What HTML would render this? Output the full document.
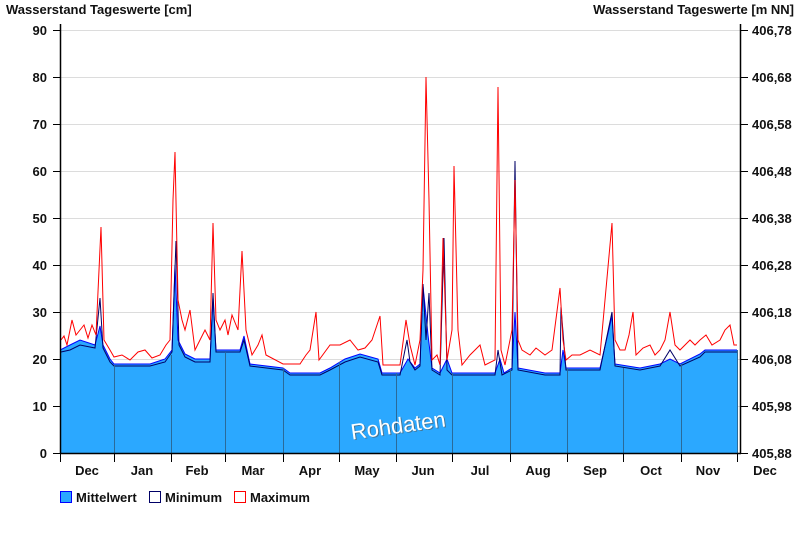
<!DOCTYPE html>
<html><head><meta charset="utf-8"><style>
html,body{margin:0;padding:0;background:#fff;width:800px;height:550px;overflow:hidden}
svg text{font-family:"Liberation Sans",Arial,sans-serif;font-weight:bold;fill:#111}
</style></head><body>
<svg width="800" height="550" xmlns="http://www.w3.org/2000/svg">
<text x="6" y="14" font-size="13">Wasserstand Tageswerte [cm]</text>
<text x="794" y="14" font-size="13" text-anchor="end">Wasserstand Tageswerte [m NN]</text>
<g stroke="#dcdcdc" stroke-width="1">
<line x1="61" y1="30.5" x2="740" y2="30.5"/><line x1="61" y1="77.5" x2="740" y2="77.5"/>
<line x1="61" y1="124.5" x2="740" y2="124.5"/><line x1="61" y1="171.5" x2="740" y2="171.5"/>
<line x1="61" y1="218.5" x2="740" y2="218.5"/><line x1="61" y1="265.5" x2="740" y2="265.5"/>
<line x1="61" y1="312.5" x2="740" y2="312.5"/><line x1="61" y1="359.5" x2="740" y2="359.5"/>
<line x1="61" y1="406.5" x2="740" y2="406.5"/>
</g>
<polygon fill="#2ba8ff" points="61,453 61,349.6 70,345 80,340 95,345 100,326 103,345 110,359 114,364 150,364 165,359 172,350 175,265 178,340 185,354 195,359 210,359 213,298 216,350 225,350 240,350 244,336 250,364 283,368 290,373 320,373 330,368 345,359 360,354 378,359 382,373 400,373 408,359 415,368 420,364 423,286 428,335 432,368 440,373 447,359 452,373 495,373 500,359 504,373 512,368 515,312 518,368 545,373 560,373 563,350 566,368 600,368 612,316 615,364 640,368 660,364 670,359 680,364 700,354 705,350 737,350 737,453"/>
<polyline fill="none" stroke="#0000ff" stroke-width="1" points="61,349.6 70,345 80,340 95,345 100,326 103,345 110,359 114,364 150,364 165,359 172,350 175,265 178,340 185,354 195,359 210,359 213,298 216,350 225,350 240,350 244,336 250,364 283,368 290,373 320,373 330,368 345,359 360,354 378,359 382,373 400,373 408,359 415,368 420,364 423,286 428,335 432,368 440,373 447,359 452,373 495,373 500,359 504,373 512,368 515,312 518,368 545,373 560,373 563,350 566,368 600,368 612,316 615,364 640,368 660,364 670,359 680,364 700,354 705,350 737,350"/>
<polyline fill="none" stroke="#000066" stroke-width="1" points="61,352 70,350 80,345 95,348 100,298 103,348 110,362 114,366 150,366 165,362 172,352 176,241 179,345 185,357 195,362 210,362 213,293 216,352 225,352 240,352 244,340 250,366 283,370 290,375 320,375 330,370 345,362 360,357 378,362 382,375 400,375 407,340 410,362 415,370 420,366 423,284 426,340 429,293 432,370 440,375 444,238 447,370 452,375 495,375 498,350 502,375 512,370 515,161 518,370 545,375 560,375 561,307 566,370 600,370 612,312 615,366 640,370 660,366 670,350 680,366 700,357 705,352 737,352"/>
<polyline fill="none" stroke="#ff0000" stroke-width="1" points="61,340 64,336 67,345 72,320 76,335 80,330 84,325 88,338 92,325 96,335 101,227 104,340 110,350 114,357 122,355 130,360 138,352 145,350 152,358 160,355 166,345 170,340 173,200 175,152 178,300 182,320 185,330 190,310 195,350 200,340 205,330 210,340 213,223 216,320 220,330 225,320 228,335 232,315 238,330 242,251 246,330 252,355 258,345 262,335 266,355 283,364 300,364 306,355 310,350 316,312 319,360 330,345 340,345 350,340 358,350 365,348 372,340 380,316 383,365 400,365 406,320 410,345 415,365 420,340 423,270 426,77 429,200 432,360 437,355 440,365 443,238 447,360 452,330 454,166 458,330 462,365 470,355 480,345 485,365 495,360 498,87 501,350 505,365 512,330 515,180 518,340 522,350 530,355 536,348 545,355 552,350 560,288 563,340 566,360 572,355 580,355 590,350 600,355 612,223 615,340 620,350 625,350 629,335 633,312 636,355 643,348 650,345 655,355 660,350 665,340 670,312 675,345 680,350 690,340 695,345 700,340 706,335 712,345 720,340 725,330 730,325 734,345 737,345"/>
<g stroke="#2a6a9a" stroke-width="1">
<line x1="114.5" y1="365" x2="114.5" y2="453"/><line x1="171.5" y1="355" x2="171.5" y2="453"/>
<line x1="225.5" y1="352" x2="225.5" y2="453"/><line x1="283.5" y1="368" x2="283.5" y2="453"/>
<line x1="339.5" y1="362" x2="339.5" y2="453"/><line x1="396.5" y1="373" x2="396.5" y2="453"/>
<line x1="452.5" y1="373" x2="452.5" y2="453"/><line x1="510.5" y1="370" x2="510.5" y2="453"/>
<line x1="567.5" y1="368" x2="567.5" y2="453"/><line x1="623.5" y1="368" x2="623.5" y2="453"/>
<line x1="681.5" y1="364" x2="681.5" y2="453"/><line x1="737.5" y1="350" x2="737.5" y2="453"/>
</g>
<g stroke="#000" stroke-width="1.5">
<line x1="60.5" y1="24" x2="60.5" y2="454"/><line x1="740.5" y1="24" x2="740.5" y2="454"/>
<line x1="60" y1="453.5" x2="741" y2="453.5"/>
</g>
<g stroke="#000" stroke-width="1">
<line x1="53" y1="30.5" x2="60" y2="30.5"/><line x1="53" y1="77.5" x2="60" y2="77.5"/><line x1="53" y1="124.5" x2="60" y2="124.5"/><line x1="53" y1="171.5" x2="60" y2="171.5"/><line x1="53" y1="218.5" x2="60" y2="218.5"/><line x1="53" y1="265.5" x2="60" y2="265.5"/><line x1="53" y1="312.5" x2="60" y2="312.5"/><line x1="53" y1="359.5" x2="60" y2="359.5"/><line x1="53" y1="406.5" x2="60" y2="406.5"/><line x1="53" y1="453.5" x2="60" y2="453.5"/>
<line x1="741" y1="30.5" x2="748" y2="30.5"/><line x1="741" y1="77.5" x2="748" y2="77.5"/><line x1="741" y1="124.5" x2="748" y2="124.5"/><line x1="741" y1="171.5" x2="748" y2="171.5"/><line x1="741" y1="218.5" x2="748" y2="218.5"/><line x1="741" y1="265.5" x2="748" y2="265.5"/><line x1="741" y1="312.5" x2="748" y2="312.5"/><line x1="741" y1="359.5" x2="748" y2="359.5"/><line x1="741" y1="406.5" x2="748" y2="406.5"/><line x1="741" y1="453.5" x2="748" y2="453.5"/>
<line x1="60.5" y1="453" x2="60.5" y2="462"/><line x1="114.5" y1="453" x2="114.5" y2="462"/><line x1="171.5" y1="453" x2="171.5" y2="462"/><line x1="225.5" y1="453" x2="225.5" y2="462"/><line x1="283.5" y1="453" x2="283.5" y2="462"/><line x1="339.5" y1="453" x2="339.5" y2="462"/><line x1="396.5" y1="453" x2="396.5" y2="462"/><line x1="452.5" y1="453" x2="452.5" y2="462"/><line x1="510.5" y1="453" x2="510.5" y2="462"/><line x1="567.5" y1="453" x2="567.5" y2="462"/><line x1="623.5" y1="453" x2="623.5" y2="462"/><line x1="681.5" y1="453" x2="681.5" y2="462"/><line x1="737.5" y1="453" x2="737.5" y2="462"/>
</g>
<g font-size="13" text-anchor="end">
<text x="47" y="35">90</text><text x="47" y="82">80</text><text x="47" y="129">70</text><text x="47" y="176">60</text><text x="47" y="223">50</text><text x="47" y="270">40</text><text x="47" y="317">30</text><text x="47" y="364">20</text><text x="47" y="411">10</text><text x="47" y="458">0</text>
</g>
<g font-size="13">
<text x="752" y="35">406,78</text><text x="752" y="82">406,68</text><text x="752" y="129">406,58</text><text x="752" y="176">406,48</text><text x="752" y="223">406,38</text><text x="752" y="270">406,28</text><text x="752" y="317">406,18</text><text x="752" y="364">406,08</text><text x="752" y="411">405,98</text><text x="752" y="458">405,88</text>
</g>
<g font-size="13" text-anchor="middle">
<text x="87" y="475">Dec</text><text x="142" y="475">Jan</text><text x="197" y="475">Feb</text><text x="253" y="475">Mar</text><text x="310" y="475">Apr</text><text x="367" y="475">May</text><text x="423" y="475">Jun</text><text x="480" y="475">Jul</text><text x="538" y="475">Aug</text><text x="595" y="475">Sep</text><text x="651" y="475">Oct</text><text x="708" y="475">Nov</text><text x="765" y="475">Dec</text>
</g>
<g transform="rotate(-8 398 425)">
<text x="399" y="434" font-size="22" text-anchor="middle" style="fill:#555;font-weight:normal;opacity:0.6">Rohdaten</text>
<text x="398" y="433" font-size="22" text-anchor="middle" style="fill:#fff;font-weight:normal">Rohdaten</text>
</g>
<rect x="60.5" y="491.5" width="11" height="11" fill="#2ba8ff" stroke="#0000ff"/>
<text x="76" y="502" font-size="13">Mittelwert</text>
<rect x="149.5" y="491.5" width="11" height="11" fill="#fff" stroke="#000066"/>
<text x="165" y="502" font-size="13">Minimum</text>
<rect x="234.5" y="491.5" width="11" height="11" fill="#fff" stroke="#ff0000"/>
<text x="250" y="502" font-size="13">Maximum</text>
</svg>
</body></html>
